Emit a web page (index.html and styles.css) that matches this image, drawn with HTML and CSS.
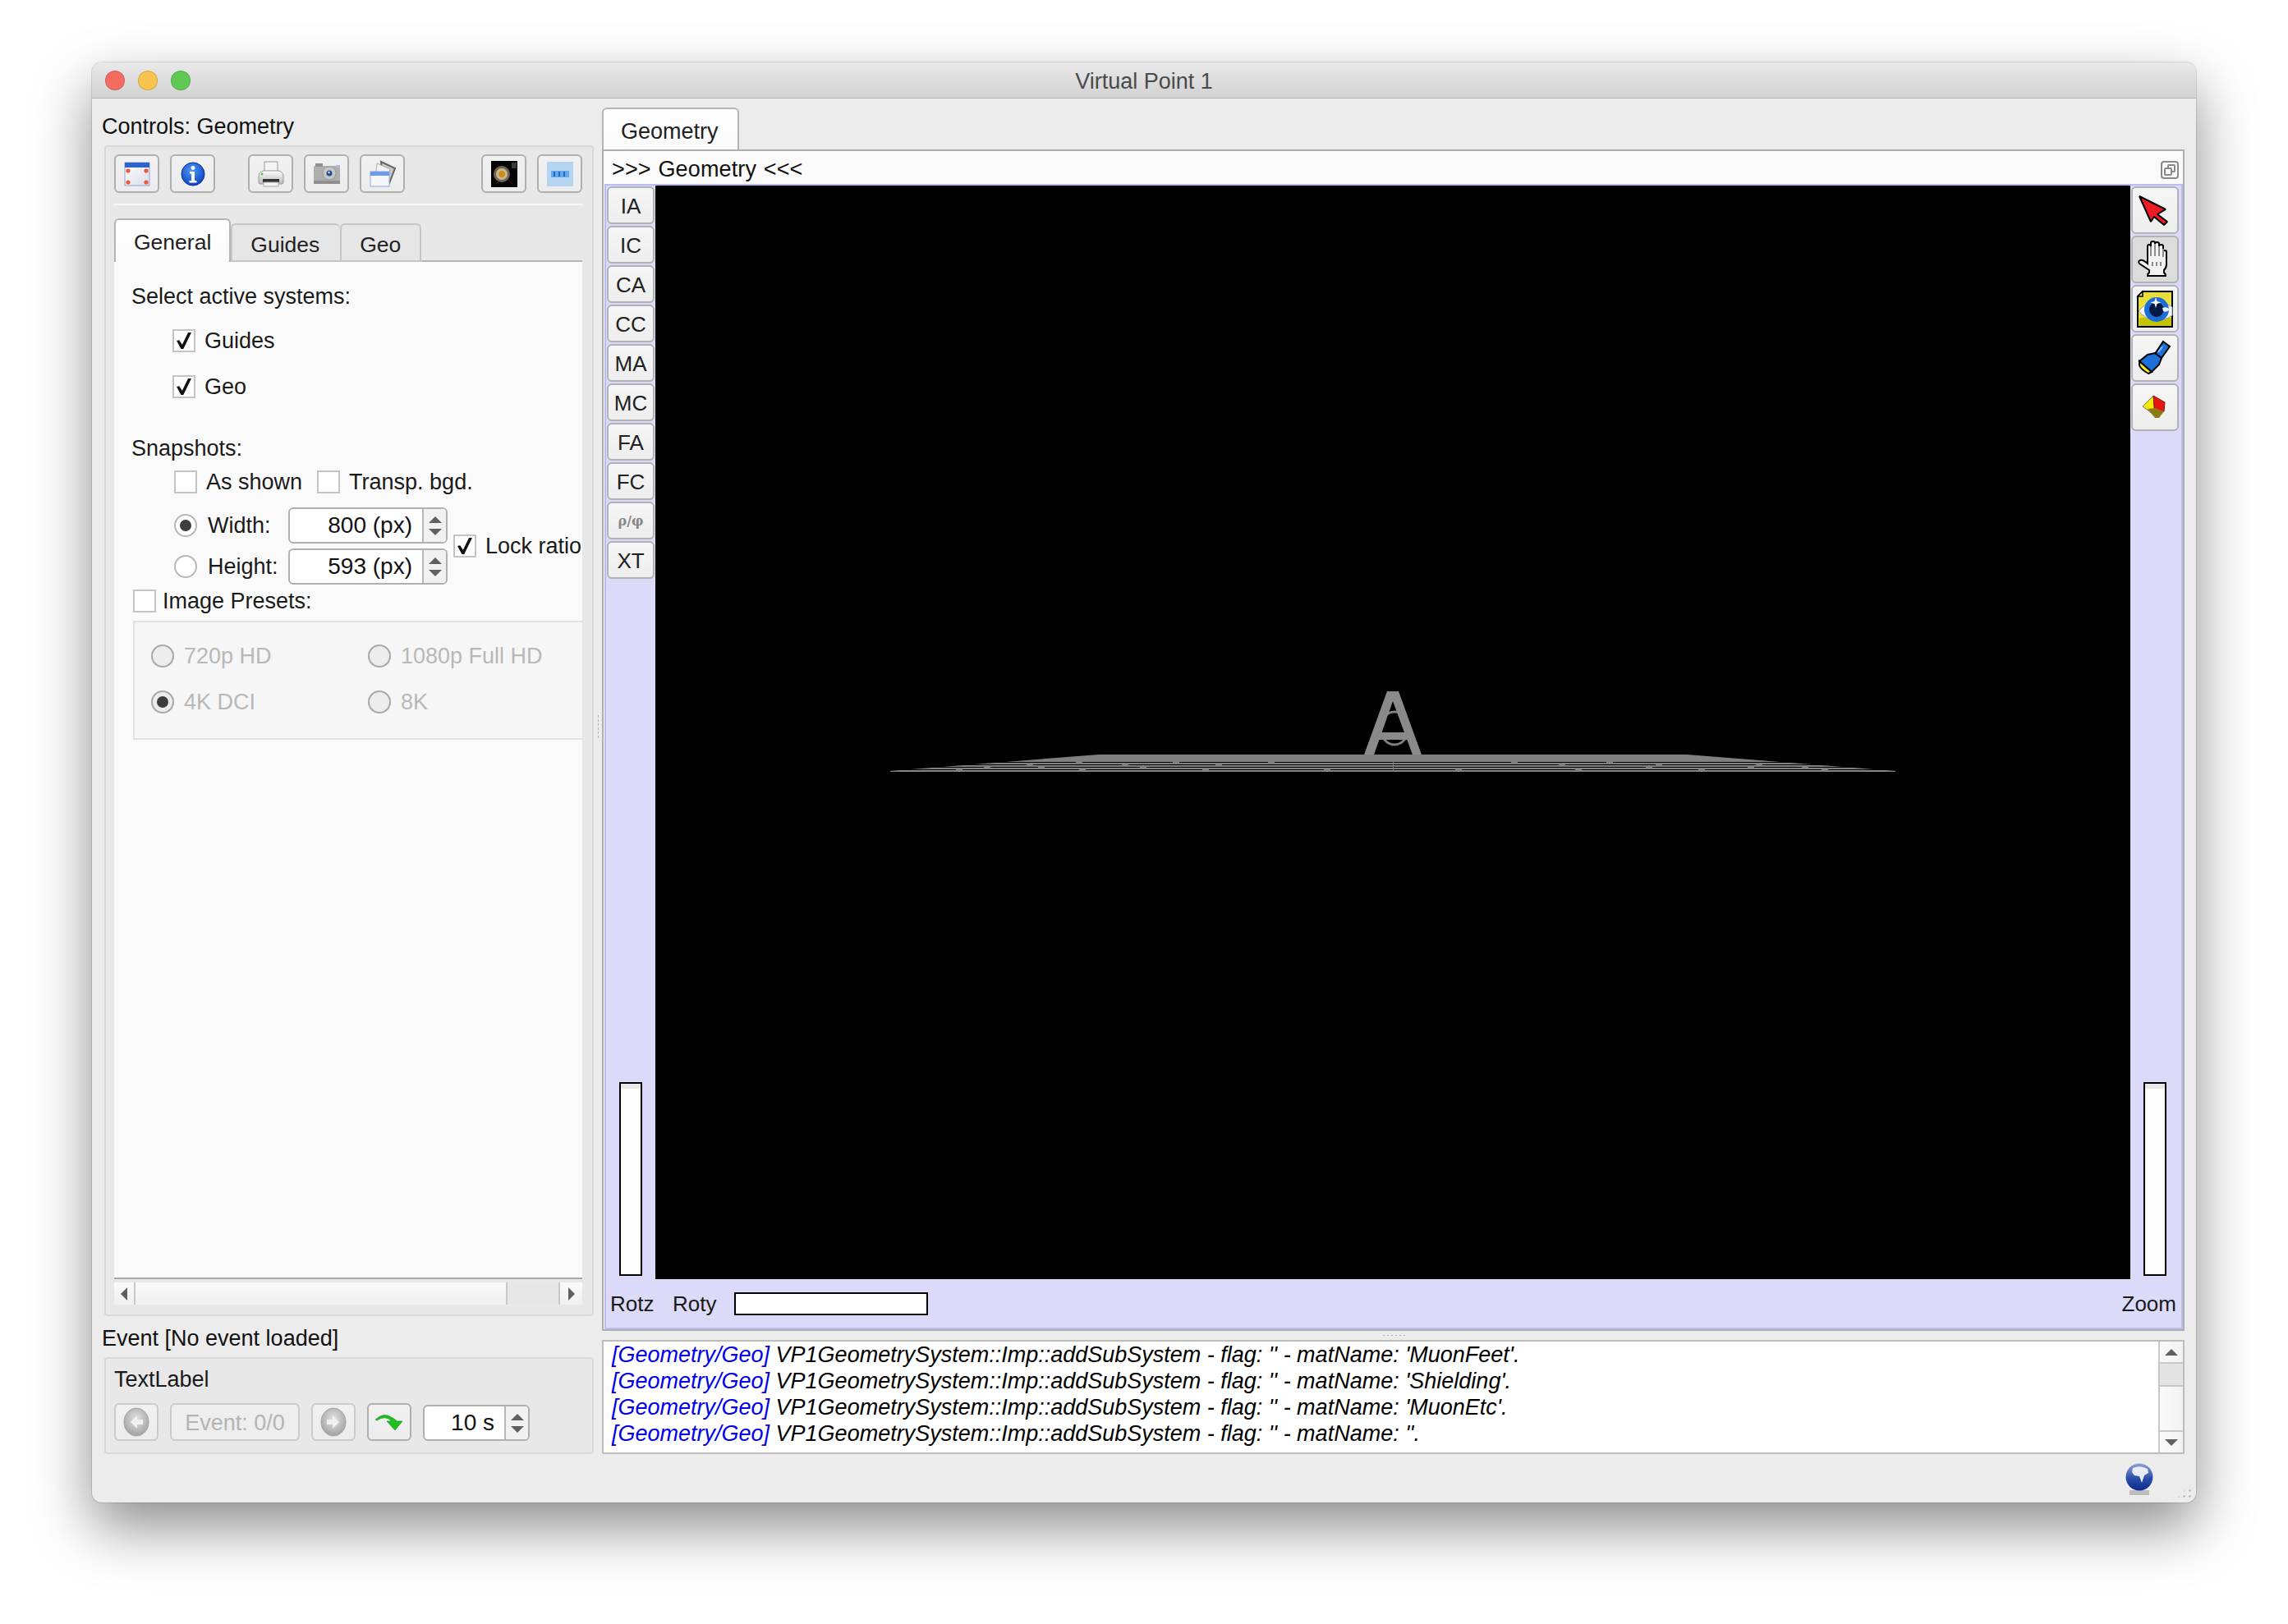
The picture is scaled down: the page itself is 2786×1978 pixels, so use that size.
FILE: index.html
```html
<!DOCTYPE html>
<html lang="en">
<head>
    <meta charset="UTF-8">
    <title>Virtual Point 1</title>
    <link rel="stylesheet" href="styles.css">
</head>
<body>
<div class="window">
    <div class="titlebar">
        <div class="lights"><i class="light red"></i><i class="light yellow"></i><i class="light green"></i></div>
        <div class="title">Virtual Point 1</div>
    </div>

    <div class="main">
        <!-- left column: controls + event box -->
        <div class="left">
            <div class="caption">Controls: Geometry</div>
            <div class="group controls">
                <div class="toolbar">
                    <div class="tool">
                        <svg width="32" height="30" viewBox="0 0 32 30">
                            <defs><linearGradient id="winBody" x1="0" y1="0" x2="1" y2="1"><stop offset="0" stop-color="#ffffff"/><stop offset="1" stop-color="#d9dde8"/></linearGradient></defs>
                            <rect x="1" y="1" width="30" height="28" fill="url(#winBody)" stroke="#8fa3cf"/>
                            <rect x="1" y="1" width="30" height="6" fill="#2f62c9"/>
                            <g fill="#f0563a"><circle cx="5" cy="11" r="2.6"/><circle cx="27" cy="11" r="2.6"/><circle cx="5" cy="25" r="2.6"/><circle cx="27" cy="25" r="2.6"/></g>
                        </svg>
                    </div>
                    <div class="tool">
                        <svg width="30" height="30" viewBox="0 0 30 30">
                            <defs><radialGradient id="infoBall" cx=".45" cy=".35" r=".7"><stop offset="0" stop-color="#4f9cf5"/><stop offset="1" stop-color="#0a3cc0"/></radialGradient></defs>
                            <circle cx="15" cy="15" r="14" fill="url(#infoBall)" stroke="#0b2f96"/>
                            <circle cx="15" cy="7.5" r="2.4" fill="#fff"/>
                            <path d="M11 12h6v11h2.5v2.5h-9V23H13v-8.500h-2z" fill="#fff"/>
                        </svg>
                    </div>
                    <div class="tool tool-gap">
                        <svg width="34" height="34" viewBox="0 0 34 34">
                            <defs><linearGradient id="printer" x1="0" y1="0" x2="0" y2="1"><stop offset="0" stop-color="#fdfdfd"/><stop offset="1" stop-color="#b9b9b9"/></linearGradient></defs>
                            <path d="M9 2h16v12H9z" fill="#f4f4f4" stroke="#999"/>
                            <path d="M2 20q0-6 6-7h18q6 1 6 7v7q0 2-2 2H4q-2 0-2-2z" fill="url(#printer)" stroke="#999"/>
                            <rect x="7" y="23" width="20" height="4" fill="#333"/>
                            <path d="M8 27h18v5H8z" fill="#f2f2f2" stroke="#aaa"/>
                            <circle cx="6" cy="17" r="1.400" fill="#45c545"/>
                        </svg>
                    </div>
                    <div class="tool">
                        <svg width="34" height="28" viewBox="0 0 34 28">
                            <rect x="1" y="4" width="32" height="22" rx="2" fill="#aeaeae"/>
                            <rect x="3" y="1" width="9" height="4" fill="#8f8f8f"/>
                            <rect x="1" y="22" width="32" height="4" fill="#8f8f8f"/>
                            <circle cx="20" cy="13" r="8" fill="#c8c8c8" stroke="#999"/>
                            <circle cx="20" cy="13" r="3.500" fill="#2d4f8f"/>
                            <circle cx="19.500" cy="12" r="1.200" fill="#cfe0ff"/>
                            <rect x="28" y="3" width="5" height="3" fill="#a4bce2"/>
                        </svg>
                    </div>
                    <div class="tool">
                        <svg width="34" height="34" viewBox="0 0 34 34">
                            <path d="M15 2l17 8-7 18-8-4z" fill="#c8c8c8" stroke="#666" stroke-width="2"/>
                            <path d="M10 4l16 7-6 16-12-4z" fill="#f3f3f3" stroke="#aaa"/>
                            <rect x="2" y="14" width="23" height="18" fill="#f4f6fb" stroke="#8fa9d8"/>
                            <rect x="2" y="14" width="23" height="5" fill="#6d9ce6"/>
                        </svg>
                    </div>
                    <div class="tool tool-end">
                        <svg width="32" height="32" viewBox="0 0 32 32">
                            <rect width="32" height="32" fill="#050505"/>
                            <path d="M6 28L13 20M26 28L19 20" stroke="#5a1010" stroke-width="1"/>
                            <circle cx="13" cy="16" r="10" fill="#6f6450"/>
                            <circle cx="13" cy="16" r="7" fill="#c8b795"/>
                            <circle cx="13" cy="16" r="4" fill="#cf8a18"/>
                            <rect x="25" y="2" width="6" height="7" fill="#3a3a3a"/>
                        </svg>
                    </div>
                    <div class="tool">
                        <svg width="32" height="30" viewBox="0 0 32 30">
                            <rect width="32" height="30" fill="#b4d4f2"/>
                            <path d="M5 11h22v8H5z" fill="#62a8ea"/>
                            <path d="M9 12v6M15 12v6M21 12v6" stroke="#2b63c4" stroke-width="2"/>
                        </svg>
                    </div>
                </div>
                <div class="separator"></div>

                <div class="tabbar">
                    <div class="tab active">General</div>
                    <div class="tab">Guides</div>
                    <div class="tab">Geo</div>
                </div>
                <div class="pane">
                    <div class="line sys-title">Select active systems:</div>
                    <div class="line opt first-opt"><span class="box on"></span>Guides</div>
                    <div class="line opt next-opt"><span class="box on"></span>Geo</div>
                    <div class="line snap-title">Snapshots:</div>
                    <div class="line shown-row">
                        <span class="box"></span><span class="shown-text">As shown</span>
                        <span class="box"></span><span>Transp. bgd.</span>
                    </div>
                    <div class="size-grid">
                        <div class="radio-label"><span class="radio on"></span>Width:</div>
                        <div class="spin size-spin"><div class="spin-val">800 (px)</div><div class="spin-arrows"><i class="up"></i><i class="down"></i></div></div>
                        <div class="lock"><span class="box on"></span>Lock ratio</div>
                        <div class="radio-label"><span class="radio"></span>Height:</div>
                        <div class="spin size-spin"><div class="spin-val">593 (px)</div><div class="spin-arrows"><i class="up"></i><i class="down"></i></div></div>
                    </div>
                    <div class="line presets-title"><span class="box"></span>Image Presets:</div>
                    <div class="presets">
                        <div class="radio-label"><span class="radio off"></span>720p HD</div>
                        <div class="radio-label"><span class="radio off"></span>1080p Full HD</div>
                        <div class="radio-label"><span class="radio off on"></span>4K DCI</div>
                        <div class="radio-label"><span class="radio off"></span>8K</div>
                    </div>
                </div>
                <div class="hscroll">
                    <div class="hs-btn"><i class="arrow-left"></i></div>
                    <div class="hs-track"></div>
                    <div class="hs-thumb"></div>
                    <div class="hs-btn end"><i class="arrow-right"></i></div>
                </div>
            </div>

            <div class="caption event-caption">Event [No event loaded]</div>
            <div class="group event">
                <div class="event-label">TextLabel</div>
                <div class="event-row">
                    <div class="tool small dim">
                        <svg width="32" height="36" viewBox="0 0 32 36">
                            <defs><radialGradient id="navBall" cx=".5" cy=".4" r=".65"><stop offset="0" stop-color="#e4e4e4"/><stop offset="1" stop-color="#9c9c9c"/></radialGradient></defs>
                            <ellipse cx="16" cy="18" rx="15" ry="17" fill="url(#navBall)" stroke="#a5a5a5"/>
                            <path d="M17 10l-8 8 8 8v-5h7v-6h-7z" fill="#f1f1f1"/>
                        </svg>
                    </div>
                    <div class="event-btn">Event: 0/0</div>
                    <div class="tool small dim">
                        <svg width="32" height="36" viewBox="0 0 32 36">
                            <ellipse cx="16" cy="18" rx="15" ry="17" fill="url(#navBall)" stroke="#a5a5a5"/>
                            <path d="M15 10l8 8-8 8v-5H8v-6h7z" fill="#f1f1f1"/>
                        </svg>
                    </div>
                    <div class="tool small">
                        <svg width="34" height="22" viewBox="0 0 34 22">
                            <path d="M0 8Q11-2 21 6 25 8 26 10H33L24 21 14 10H20Q12 2 2 9Z" fill="#1fbf1f" stroke="#128a12" stroke-width=".6"/>
                        </svg>
                    </div>
                    <div class="spin time-spin"><div class="spin-val">10 s</div><div class="spin-arrows"><i class="up"></i><i class="down"></i></div></div>
                </div>
            </div>
        </div>

        <div class="vsplit"><i></i></div>

        <!-- right column: tab with 3D view, message log -->
        <div class="right">
            <div class="tabbar big"><div class="tab active">Geometry</div></div>
            <div class="view-pane">
                <div class="view-title">
                    <span>&gt;&gt;&gt; Geometry &lt;&lt;&lt;</span>
                    <svg class="float-icon" width="22" height="22" viewBox="0 0 22 22" fill="none" stroke="#8a8a8a" stroke-width="2">
                        <rect x="1" y="1" width="20" height="20" rx="3"/>
                        <rect x="9" y="5" width="8" height="8" rx="1"/>
                        <rect x="5" y="9" width="8" height="8" rx="1" fill="#fafafa"/>
                    </svg>
                </div>
                <div class="violet">
                    <div class="viewer-row">
                        <div class="side left-side">
                            <div class="views">
                                <div class="view-btn">IA</div>
                                <div class="view-btn">IC</div>
                                <div class="view-btn">CA</div>
                                <div class="view-btn">CC</div>
                                <div class="view-btn">MA</div>
                                <div class="view-btn">MC</div>
                                <div class="view-btn">FA</div>
                                <div class="view-btn">FC</div>
                                <div class="view-btn greek">ρ/φ</div>
                                <div class="view-btn">XT</div>
                            </div>
                            <div class="wheel"></div>
                        </div>

                        <svg class="canvas" width="1796" height="1332" viewBox="0 0 1796 1332">
                            <ellipse cx="900" cy="661" rx="17" ry="20" fill="none" stroke="#808080" stroke-width="3"/>
                            <path fill="#8a8a8a" fill-rule="evenodd" d="M891 616H905L934 696H923L915.300 675H881.400L874 696H862ZM898 628L912 666H884.600Z"/>
                            <path fill="#808080" d="M286 713L540 693H1256L1510 713Z"/>
                            <g stroke="#000" stroke-width="1">
                                <path d="M286 702.500H1510M286 705.500H1510M286 708.500H1510M286 711.500H1510"/>
                            </g>
                            <g stroke="#808080" stroke-width="2">
                                <path d="M512 702.500h8M630 702.500h8M746 702.500h8M1042 702.500h8M1158 702.500h8"/>
                                <path d="M452 705.500h8M568 705.500h8M682 705.500h8M1100 705.500h8M1218 705.500h8M1340 705.500h8"/>
                                <path d="M400 708.500h8M466 708.500h8M590 708.500h8M1206 708.500h8M1330 708.500h8M1396 708.500h8"/>
                                <path d="M366 711.500h8M516 711.500h8M666 711.500h8M814 711.500h8M974 711.500h8M1120 711.500h8M1270 711.500h8M1420 711.500h8"/>
                            </g>
                            <path d="M286 713.500H1510" stroke="#8c8c8c"/>
                            <path d="M898.500 702V713" stroke="#808080"/>
                        </svg>

                        <div class="side right-side">
                            <div class="views">
                                <div class="mode-btn">
                                    <svg width="58" height="58" viewBox="0 0 58 58">
                                        <path d="M10 12L42 28L32 34L44 43L40 47L28 37L24 43Z" fill="#ee1c25" stroke="#000" stroke-width="2" stroke-linejoin="bevel"/>
                                    </svg>
                                </div>
                                <div class="mode-btn checked">
                                    <svg width="58" height="58" viewBox="0 0 58 58">
                                        <path d="M20 30V13q0-2 2-2t2 2V9q0-2 2.500-2T29 9v1q0-2 2.500-2T34 10v3q0-2 2.500-2t2.500 2v6q0-1 2-1t2 2v15q0 4-3 7v3q2 1 2 4H20q0-3 2-4v-3L10 34q-2-3 1-4t9 4z" fill="#f3f3f3" stroke="#000" stroke-width="2"/>
                                        <path d="M24 13v12M29 10v15M34 13v12M39 16v10M26 32v5M31 32v5M36 32v5" stroke="#8c8c8c" stroke-width="2"/>
                                    </svg>
                                </div>
                                <div class="mode-btn">
                                    <svg width="58" height="58" viewBox="0 0 58 58">
                                        <path d="M14 8H50V51H8V14Z" fill="#e8df3c" stroke="#000" stroke-width="2"/>
                                        <path d="M10 40H49V50H10Z" fill="#c4c400"/>
                                        <path d="M9 32Q26 12 50 27V37Q28 52 9 32Z" fill="#f5f8fc" stroke="#8fa0b8"/>
                                        <circle cx="31" cy="30" r="15" fill="#1c6dd6"/>
                                        <circle cx="31" cy="30" r="9" fill="#041a45"/>
                                        <path d="M30 15l1.500 5 5 1.500-5 1.500-1.500 5-1.500-5-5-1.500 5-1.500z" fill="#fff"/>
                                        <path d="M38 28q6-2 9 2-4 4-8 2z" fill="#e8f2ff"/>
                                        <path d="M14 8V14H8Z" fill="#f4ef88" stroke="#000" stroke-width="1.500"/>
                                    </svg>
                                </div>
                                <div class="mode-btn">
                                    <svg width="58" height="58" viewBox="0 0 58 58">
                                        <path d="M39 9L47 15 37 29 29 24Z" fill="#1a6fd8" stroke="#000" stroke-width="2"/>
                                        <path d="M29 23L37 29 34 37 25 46 10 33 20 25Z" fill="#1a6fd8" stroke="#000" stroke-width="2"/>
                                        <path d="M10 33L25 46 21 48Q12 43 10 38Z" fill="#f6ec1a" stroke="#000" stroke-width="2"/>
                                        <path d="M38 15L33 22" stroke="#8bc0ff" stroke-width="2"/>
                                    </svg>
                                </div>
                                <div class="mode-btn">
                                    <svg width="58" height="58" viewBox="0 0 58 58">
                                        <path d="M14 28L27 15 29 39Z" fill="#f5e90a" stroke="#777" stroke-width="1"/>
                                        <path d="M27 15L41 23 40 34 29 39Z" fill="#e8140e" stroke="#7a1a0a" stroke-width="1"/>
                                        <path d="M20 31L29 42 34 42 40 34 29 30Z" fill="#8c7a12"/>
                                    </svg>
                                </div>
                            </div>
                            <div class="wheel"></div>
                        </div>
                    </div>
                    <div class="wheel-row">
                        <span class="rotz">Rotz</span>
                        <span class="roty">Roty</span>
                        <div class="hwheel"></div>
                        <span class="zoom">Zoom</span>
                    </div>
                </div>
            </div>

            <div class="hsplit"><i></i></div>

            <div class="log">
                <div class="log-text">
                    <div><span class="src">[Geometry/Geo]</span> VP1GeometrySystem::Imp::addSubSystem - flag: '' - matName: 'MuonFeet'.</div>
                    <div><span class="src">[Geometry/Geo]</span> VP1GeometrySystem::Imp::addSubSystem - flag: '' - matName: 'Shielding'.</div>
                    <div><span class="src">[Geometry/Geo]</span> VP1GeometrySystem::Imp::addSubSystem - flag: '' - matName: 'MuonEtc'.</div>
                    <div><span class="src">[Geometry/Geo]</span> VP1GeometrySystem::Imp::addSubSystem - flag: '' - matName: ''.</div>
                </div>
                <div class="vscroll">
                    <div class="vs-btn"><i class="up"></i></div>
                    <div class="vs-thumb"></div>
                    <div class="vs-track"></div>
                    <div class="vs-btn bottom"><i class="down"></i></div>
                </div>
            </div>

            <div class="status">
                <svg width="34" height="40" viewBox="0 0 34 40">
                    <defs><linearGradient id="globe" x1="0" y1="0" x2="0" y2="1"><stop offset="0" stop-color="#8ea2d4"/><stop offset=".55" stop-color="#2b4da8"/><stop offset="1" stop-color="#0c2a8c"/></linearGradient></defs>
                    <rect x="5" y="33" width="24" height="6" fill="#bdbdbd"/>
                    <circle cx="17" cy="17" r="16.500" fill="url(#globe)"/>
                    <path d="M9 6Q18 2 27 7L28 12 23 15 20 24 17 16 11 15 8 11Z" fill="#e8ebf3"/>
                </svg>
            </div>
        </div>
    </div>
    <div class="grip"></div>
</div>
</body>
</html>
```

FILE: styles.css
```css
/* Page + window frame */
html {
    background-color: #fff;
}

body {
    box-sizing: border-box;
    height: 1978px;
    margin: 0;
    padding: 76px 0 0 112px;
    overflow: hidden;
    font-family: "Liberation Sans", Arial, sans-serif;
    font-size: 27px;
    color: #1a1a1a;
}

.window {
    position: relative;
    display: flex;
    flex-direction: column;
    width: 2562px;
    height: 1754px;
    background-color: #ececec;
    border-radius: 12px;
    box-shadow: 0 0 0 1px rgba(0, 0, 0, 0.12), 0 30px 70px rgba(0, 0, 0, 0.45);
}

.titlebar {
    display: flex;
    align-items: center;
    justify-content: center;
    position: relative;
    box-sizing: border-box;
    height: 44px;
    padding-top: 3px;
    background: linear-gradient(#e9e9e9, #d2d2d2);
    border-bottom: 1px solid #b4b4b4;
    border-radius: 12px 12px 0 0;
}

.lights {
    position: absolute;
    left: 16px;
    top: 10px;
    display: flex;
    gap: 16px;
}

.light {
    width: 24px;
    height: 24px;
    border-radius: 50%;
    box-sizing: border-box;
    border: 1px solid rgba(0, 0, 0, 0.14);
}

.light.red { background-color: #f36c62; }
.light.yellow { background-color: #f8c34f; }
.light.green { background-color: #5fc854; }

.title {
    color: #4a4a4a;
}

.main {
    display: flex;
    flex: 1;
}

/* Left column */
.left {
    width: 596px;
    padding: 19px 0 0 15px;
}

.caption {
    height: 30px;
    line-height: 30px;
    margin-left: -3px;
    color: #111;
    white-space: nowrap;
}

.group {
    box-sizing: border-box;
    background-color: #e8e8e8;
    border: 2px solid #d8d8d8;
    border-radius: 4px;
}

.controls {
    height: 1426px;
    margin-top: 8px;
    padding: 9px 12px 0 10px;
}

.toolbar {
    display: flex;
    gap: 13px;
}

.tool {
    display: flex;
    align-items: center;
    justify-content: center;
    box-sizing: border-box;
    width: 55px;
    height: 47px;
    background: linear-gradient(#f1f1f1, #ececec);
    border: 2px solid #afafaf;
    border-radius: 6px;
}

.tool.small {
    width: 54px;
    height: 46px;
}

.tool.dim {
    border-color: #cbcbcb;
}

.tool-gap {
    margin-left: 27px;
}

.tool-end {
    margin-left: auto;
}

.separator {
    height: 2px;
    margin-top: 13px;
    background-color: #f8f8f8;
}

/* Tabs */
.tabbar {
    display: flex;
    align-items: flex-end;
    box-sizing: border-box;
    height: 52px;
    margin-top: 17px;
    border-bottom: 2px solid #b4b4b4;
}

.tab {
    box-sizing: border-box;
    height: 47px;
    line-height: 48px;
    padding: 0 25px 0 22px;
    margin-bottom: -2px;
    font-size: 26.500px;
    background-color: #e6e6e6;
    border: 2px solid #c6c6c6;
    border-right-width: 0;
    border-radius: 6px 6px 0 0;
    color: #222;
}

.tab:last-child {
    border-right-width: 2px;
    padding-right: 23px;
}

.tab.active {
    height: 53px;
    line-height: 54px;
    padding: 0 22px;
    background: linear-gradient(#ffffff, #fafafa);
    border: 2px solid #b4b4b4;
    border-bottom: 0;
}

/* General tab contents */
.pane {
    box-sizing: border-box;
    height: 1239px;
    padding: 3px 0 0 22px;
    background-color: #fafafa;
    border-bottom: 2px solid #a8a8a8;
    overflow: hidden;
}

.line {
    display: flex;
    align-items: center;
    height: 30px;
    white-space: nowrap;
}

.sys-title {
    margin: 24px 0 0 -1px;
}

.opt {
    padding-left: 49px;
}

.first-opt {
    margin-top: 24px;
}

.next-opt {
    margin-top: 26px;
}

.snap-title {
    margin: 45px 0 0 -1px;
}

.shown-row {
    margin-top: 11px;
    padding-left: 51px;
}

.shown-text {
    margin-right: 18px;
}

.box {
    position: relative;
    flex: none;
    box-sizing: border-box;
    width: 28px;
    height: 28px;
    margin-right: 11px;
    background-color: #fff;
    border: 2px solid #c4c4c4;
}

/* check mark */
.box.on::after {
    content: "";
    position: absolute;
    left: 3px;
    top: 2px;
    width: 18px;
    height: 20px;
    background-color: #111;
    clip-path: polygon(0 50%, 18% 46%, 38% 74%, 78% 0, 100% 0, 46% 100%, 30% 100%);
}

.size-grid {
    display: grid;
    grid-template-columns: 139px 194px auto;
    grid-template-rows: 44px 44px;
    row-gap: 6px;
    margin: 16px 0 0 51px;
}

.radio-label {
    display: flex;
    align-items: center;
    white-space: nowrap;
}

.radio {
    flex: none;
    box-sizing: border-box;
    display: flex;
    align-items: center;
    justify-content: center;
    width: 28px;
    height: 28px;
    margin-right: 13px;
    background-color: #fff;
    border: 2px solid #b8b8b8;
    border-radius: 50%;
}

.radio.on::after {
    content: "";
    width: 14px;
    height: 14px;
    border-radius: 50%;
    background-color: #3d3d3d;
}

.lock {
    grid-column: 3;
    grid-row: 1 / 3;
    display: flex;
    align-items: center;
    padding-left: 7px;
    white-space: nowrap;
}

.spin {
    display: flex;
    box-sizing: border-box;
    background-color: #fff;
    border: 2px solid #b0b0b0;
    border-radius: 6px;
    overflow: hidden;
    font-size: 28px;
    color: #111;
}

.spin-val {
    flex: 1;
    text-align: right;
    align-self: center;
    white-space: nowrap;
}

.size-spin .spin-val {
    padding-right: 12px;
}

.spin-arrows {
    display: flex;
    flex-direction: column;
    align-items: center;
    justify-content: center;
    gap: 7px;
    flex: none;
    width: 27px;
    background-color: #f1f1f1;
    border-left: 2px solid #b8b8b8;
}

.up, .down {
    display: block;
    width: 0;
    height: 0;
    border-left: 8px solid transparent;
    border-right: 8px solid transparent;
}

.up { border-bottom: 8px solid #606060; }
.down { border-top: 8px solid #606060; }

.presets-title {
    margin: 5px 0 0 1px;
}

.presets-title .box {
    margin-right: 8px;
}

.presets {
    display: grid;
    grid-template-columns: 264px 264px;
    grid-auto-rows: 56px;
    box-sizing: border-box;
    width: 590px;
    height: 145px;
    margin: 9px 0 0 1px;
    padding: 13px 0 0 20px;
    background-color: #f6f6f6;
    border: 2px solid #e2e2e2;
    color: #b8b8b8;
}

.presets .radio {
    margin-right: 12px;
}

.radio.off {
    background-color: #ececec;
    border-color: #a8a8a8;
}

/* Horizontal scroll bar under the tab */
.hscroll {
    display: flex;
    height: 27px;
    margin-top: 4px;
    background: linear-gradient(#fafafa, #f0f0f0);
}

.hs-btn {
    display: flex;
    align-items: center;
    justify-content: center;
    box-sizing: border-box;
    width: 26px;
    border-right: 2px solid #c8c8c8;
}

.hs-btn.end {
    width: 27px;
    border-right: 0;
}

.hs-track {
    flex: 1;
}

.hs-thumb {
    width: 62px;
    background-color: #e6e6e6;
    border-left: 2px solid #c8c8c8;
    border-right: 2px solid #c8c8c8;
}

.arrow-left, .arrow-right {
    display: block;
    width: 0;
    height: 0;
    border-top: 8px solid transparent;
    border-bottom: 8px solid transparent;
}

.arrow-left { border-right: 8px solid #606060; }
.arrow-right { border-left: 8px solid #606060; }

/* Event box */
.event-caption {
    margin-top: 12px;
}

.event {
    height: 118px;
    margin-top: 8px;
    padding: 10px 12px 0 10px;
}

.event-label {
    height: 30px;
    line-height: 30px;
}

.event-row {
    display: flex;
    gap: 14px;
    margin-top: 14px;
}

.event-btn {
    box-sizing: border-box;
    width: 158px;
    height: 46px;
    line-height: 45px;
    text-align: center;
    background-color: #eeeeee;
    border: 2px solid #cbcbcb;
    border-radius: 6px;
    color: #b4b4b4;
}

.time-spin {
    width: 130px;
    height: 44px;
    margin-top: 2px;
}

.time-spin .spin-val {
    padding-right: 12px;
}

/* Splitters */
.vsplit {
    display: flex;
    align-items: center;
    justify-content: center;
    width: 10px;
    padding-bottom: 180px;
}

.vsplit i {
    width: 3px;
    height: 30px;
    background-image: radial-gradient(#b4b4b4 1px, transparent 1px);
    background-size: 3px 5px;
}

.hsplit {
    display: flex;
    align-items: center;
    justify-content: center;
    height: 11px;
}

.hsplit i {
    width: 30px;
    height: 3px;
    background-image: radial-gradient(#b4b4b4 1px, transparent 1px);
    background-size: 5px 3px;
}

/* Right column */
.right {
    width: 1927px;
    padding-top: 11px;
}

.tabbar.big {
    margin-top: 0;
    height: 51px;
    border-bottom: 0;
}

.tabbar.big .tab {
    height: 51px;
    margin: 0;
    padding: 0 23px 0 21px;
    line-height: 54px;
    font-size: 27px;
}

.view-pane {
    box-sizing: border-box;
    height: 1439px;
    background-color: #fafafa;
    border: 2px solid #aeaeae;
}

.view-title {
    display: flex;
    align-items: center;
    justify-content: space-between;
    box-sizing: border-box;
    height: 40px;
    padding: 5px 5px 0 10px;
    word-spacing: 1px;
    letter-spacing: 0.15px;
    color: #111;
}

.violet {
    box-sizing: border-box;
    height: 1395px;
    margin-left: 1px;
    background-color: #dbdbf9;
    border: 2px solid #bcbcf0;
    font-size: 26px;
}

.viewer-row {
    display: flex;
    height: 1332px;
}

.side {
    display: flex;
    flex-direction: column;
    justify-content: space-between;
}

.left-side {
    width: 60px;
    padding-left: 1px;
    box-sizing: border-box;
}

.right-side {
    width: 61px;
    padding-left: 1px;
    box-sizing: border-box;
}

.views {
    display: flex;
    flex-direction: column;
    gap: 2px;
    margin-top: 1px;
}

.view-btn {
    box-sizing: border-box;
    width: 58px;
    height: 46px;
    line-height: 44px;
    text-align: center;
    background: linear-gradient(#f6f6f6, #ededed);
    border: 2px solid #b2b2b2;
    border-radius: 6px;
    color: #222;
}

.view-btn.greek {
    font-family: "DejaVu Serif", serif;
    font-size: 16px;
    font-weight: bold;
    color: #888;
}

.mode-btn {
    box-sizing: border-box;
    width: 58px;
    height: 58px;
    background: linear-gradient(#f6f6f6, #ededed);
    border: 2px solid #b2b2b2;
    border-radius: 6px;
    overflow: hidden;
}

.mode-btn svg {
    display: block;
    margin: -2px;
}

.mode-btn.checked {
    background: #dcdcdc;
}

.canvas {
    display: block;
    flex: none;
    background-color: #000;
}

.wheel {
    box-sizing: border-box;
    width: 28px;
    height: 236px;
    margin: 0 0 4px 15px;
    background: linear-gradient(#e8e8e8 6px, #fff 6px);
    border: 2px solid #000;
}

.wheel-row {
    display: flex;
    align-items: center;
    height: 59px;
    padding: 2px 6px 0 5px;
    box-sizing: border-box;
}

.rotz {
    width: 76px;
}

.roty {
    width: 75px;
}

.hwheel {
    box-sizing: border-box;
    width: 236px;
    height: 28px;
    margin-top: -2px;
    background-color: #fff;
    border: 2px solid #000;
}

.zoom {
    margin-left: auto;
}

/* Message log */
.log {
    display: flex;
    box-sizing: border-box;
    height: 139px;
    background-color: #fff;
    border: 2px solid #bdbdbd;
    overflow: hidden;
}

.log-text {
    flex: 1;
    padding: 0 0 0 10px;
    font-style: italic;
    line-height: 32px;
    color: #000;
    white-space: nowrap;
}

.src {
    color: #0000ee;
}

.vscroll {
    display: flex;
    flex-direction: column;
    width: 28px;
    background: linear-gradient(90deg, #fafafa, #f2f2f2);
    border-left: 2px solid #c8c8c8;
}

.vs-btn {
    display: flex;
    align-items: center;
    justify-content: center;
    flex: none;
    height: 25px;
    border-bottom: 2px solid #c8c8c8;
}

.vs-btn.bottom {
    border-bottom: 0;
    border-top: 2px solid #c8c8c8;
}

.vs-thumb {
    flex: none;
    height: 26px;
    background-color: #e4e4e4;
    border-bottom: 2px solid #c8c8c8;
}

.vs-track {
    flex: 1;
}

/* Status bar */
.status {
    display: flex;
    justify-content: flex-end;
    padding: 11px 38px 0 0;
}

.grip {
    position: absolute;
    right: 3px;
    bottom: 3px;
    width: 22px;
    height: 22px;
    background-image: radial-gradient(#bdbdbd 1px, transparent 1.500px);
    background-size: 7px 7px;
    clip-path: polygon(100% 0, 100% 100%, 0 100%);
}
```
